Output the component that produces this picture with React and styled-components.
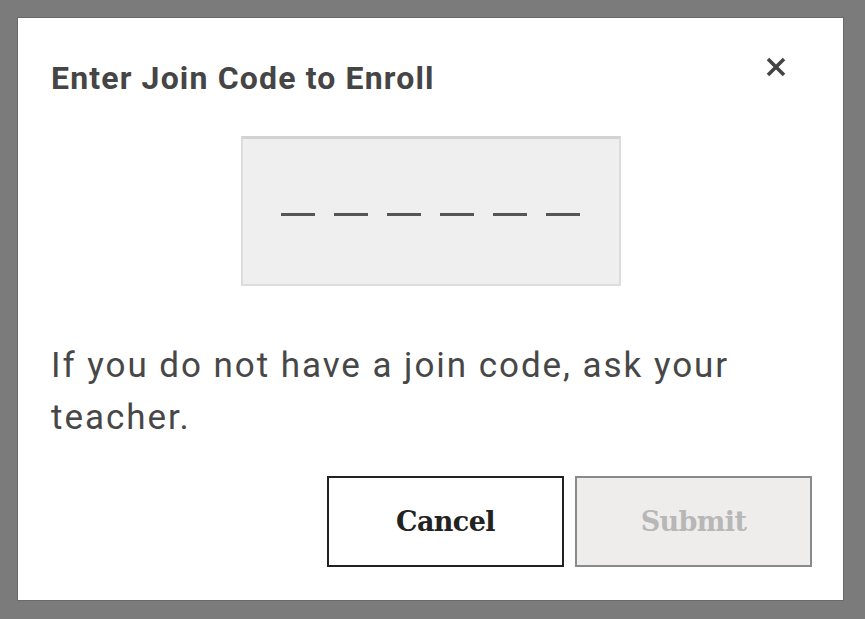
import React, { useState } from "react";
import styled, { createGlobalStyle } from "styled-components";

const GlobalStyle = createGlobalStyle`
  html, body {
    margin: 0;
    padding: 0;
    background: #7b7b7b;
  }
  body {
    font-family: Roboto, "Noto Sans", sans-serif;
  }
`;

const Backdrop = styled.div`
  width: 865px;
  height: 619px;
  box-sizing: border-box;
  padding: 17px 21px 18px 17px;
  background: #7b7b7b;
`;

const Dialog = styled.div`
  height: 100%;
  box-sizing: border-box;
  background: #fff;
  border: 1px solid #6a6a6a;
  padding: 0 31px 0 33px;
  display: flex;
  flex-direction: column;
`;

const Header = styled.div`
  display: flex;
  align-items: center;
  justify-content: space-between;
  height: 118px;
  padding-top: 2px;
  box-sizing: border-box;
`;

const Title = styled.h1`
  margin: 0;
  font-size: 32px;
  font-weight: 700;
  color: #454545;
  letter-spacing: 1.15px;
`;

const CloseButton = styled.button`
  border: none;
  background: none;
  padding: 0;
  margin: -22px 24px 0 0;
  width: 24px;
  height: 24px;
  cursor: pointer;
  display: flex;
  align-items: center;
  justify-content: center;
`;

const CodeBox = styled.div`
  align-self: center;
  width: 380px;
  height: 150px;
  margin-left: -2px;
  padding-top: 6px;
  box-sizing: border-box;
  background: #efefef;
  border: 2px solid #dddddd;
  border-top: 3px solid #d2d2d2;
  display: flex;
  align-items: center;
  justify-content: center;
  gap: 19px;
`;

const Dash = styled.span`
  display: block;
  width: 34px;
  height: 3px;
  background: ${({ filled }) => (filled ? "#222" : "#555")};
`;

const Help = styled.p`
  margin: 54px 0 0;
  font-size: 35px;
  line-height: 52px;
  letter-spacing: 1.95px;
  color: #474747;
`;

const Actions = styled.div`
  display: flex;
  justify-content: flex-end;
  gap: 11px;
  margin-top: 32px;
`;

const Button = styled.button`
  width: 237px;
  height: 91px;
  box-sizing: border-box;
  font-family: "DejaVu Serif", "Liberation Serif", serif;
  font-weight: bold;
  font-size: 27px;
  letter-spacing: -0.6px;
  cursor: ${({ disabled }) => (disabled ? "default" : "pointer")};
  background: ${({ disabled }) => (disabled ? "#efedec" : "#fff")};
  color: ${({ disabled }) => (disabled ? "#b7b7b7" : "#222")};
  border: 2px solid ${({ disabled }) => (disabled ? "#8a8a8a" : "#222")};
`;

const CloseIcon = () => (
  <svg width="22" height="22" viewBox="0 0 22 22">
    <path d="M3 3 L19 19 M19 3 L3 19" stroke="#444" strokeWidth="3.6" strokeLinecap="butt" />
  </svg>
);

const App = () => {
  const [code] = useState("");

  return (
    <>
      <GlobalStyle />
      <Backdrop>
        <Dialog>
          <Header>
            <Title>Enter Join Code to Enroll</Title>
            <CloseButton aria-label="Close">
              <CloseIcon />
            </CloseButton>
          </Header>
          <CodeBox>
            {[0, 1, 2, 3, 4, 5].map((i) => (
              <Dash key={i} filled={!!code[i]} />
            ))}
          </CodeBox>
          <Help>If you do not have a join code, ask your teacher.</Help>
          <Actions>
            <Button>Cancel</Button>
            <Button disabled={code.length < 6}>Submit</Button>
          </Actions>
        </Dialog>
      </Backdrop>
    </>
  );
};

export default App;
